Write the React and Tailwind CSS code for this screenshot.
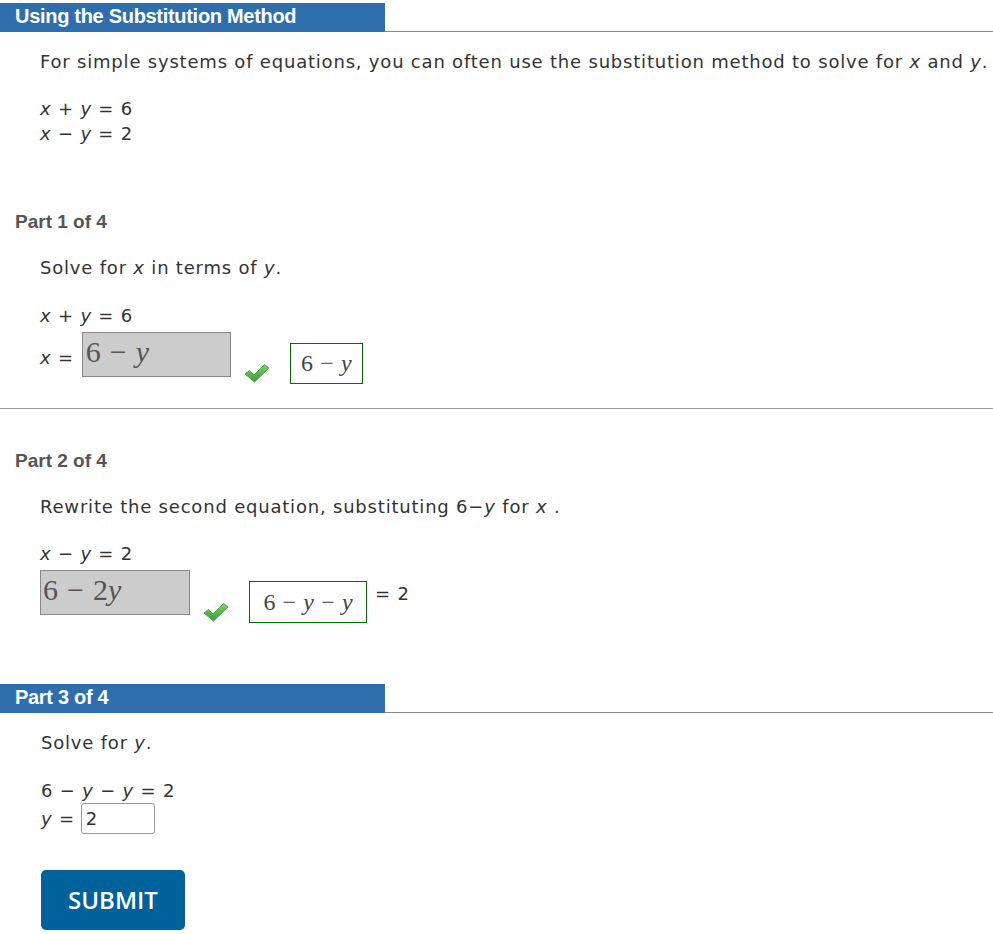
import React from 'react';

const sans = { fontFamily: '"DejaVu Sans", Verdana, sans-serif' };

function Check() {
  return (
    <svg width="26" height="20" viewBox="0 0 26 20" className="block">
      <defs>
        <linearGradient id="chk" x1="0" y1="0" x2="0" y2="1">
          <stop offset="0" stopColor="#80d070" />
          <stop offset="1" stopColor="#3d9a38" />
        </linearGradient>
      </defs>
      <path d="M1 11 L5.5 7.5 L10 12 L20.5 1.5 L25 5 L10.5 19 Z" fill="url(#chk)" stroke="#4aa845" strokeWidth="1" strokeLinejoin="round" />
    </svg>
  );
}

function Bar({ children }) {
  return (
    <div className="flex items-end">
      <div className="w-[385px] h-[29px] bg-[#2f6ead] text-white font-bold text-[20px] px-[15px] leading-[27px] font-['Liberation_Sans',Arial,sans-serif] tracking-[-0.3px]">
        {children}
      </div>
      <div className="flex-1 border-b border-[#888]" />
    </div>
  );
}

const I = ({ children }) => <i>{children}</i>;
const M = ({ children }) => <span className="italic font-['Liberation_Serif',serif]">{children}</span>;
const Minus = () => <span className="mx-[0.3em]">−</span>;

export default function App() {
  return (
    <div className="bg-white text-[#333] text-[18px] tracking-[0.8px] min-h-[934px] pt-[3px] overflow-hidden" style={sans}>
      <Bar>Using the Substitution Method</Bar>

      <div className="pl-[40px]">
        <p className="mt-[18px] leading-[24px] whitespace-nowrap">
          For simple systems of equations, you can often use the substitution method to solve for <I>x</I> and <I>y</I>.
        </p>
        <div className="mt-[22px] leading-[25px]">
          <div><I>x</I> + <I>y</I> = 6</div>
          <div><I>x</I> − <I>y</I> = 2</div>
        </div>
      </div>

      <div className="mt-[64px] pl-[15px] font-bold text-[#555] text-[19px] tracking-normal leading-[24px] font-['Liberation_Sans',Arial,sans-serif]">Part 1 of 4</div>
      <div className="pl-[40px]">
        <p className="mt-[22px] leading-[24px]">Solve for <I>x</I> in terms of <I>y</I>.</p>
        <div className="mt-[24px] leading-[24px]"><I>x</I> + <I>y</I> = 6</div>
        <div className="flex items-start mt-[4px]">
          <span className="mt-[12px] mr-[8px]"><I>x</I> =</span>
          <div className="w-[149px] h-[45px] bg-[#cccccc] border border-[#888] text-[#555] text-[30px] tracking-normal leading-[38px] pl-[3px] font-['Liberation_Serif',serif]">
            6<Minus /><M>y</M>
          </div>
          <div className="mt-[31px] ml-[13px]"><Check /></div>
          <div className="mt-[11px] ml-[20px] w-[73px] h-[41px] border border-[#007000] text-[#444] text-[24px] tracking-normal leading-[38px] text-center font-['Liberation_Serif',serif]">
            6<Minus /><M>y</M>
          </div>
        </div>
      </div>

      <div className="mt-[24px] border-t border-[#999]" />

      <div className="mt-[40px] pl-[15px] font-bold text-[#555] text-[19px] tracking-normal leading-[24px] font-['Liberation_Sans',Arial,sans-serif]">Part 2 of 4</div>
      <div className="pl-[40px]">
        <p className="mt-[22px] leading-[24px]">Rewrite the second equation, substituting 6−<I>y</I> for <I>x</I> .</p>
        <div className="mt-[23px] leading-[24px]"><I>x</I> − <I>y</I> = 2</div>
        <div className="flex items-start mt-[4px]">
          <div className="w-[150px] h-[45px] bg-[#cccccc] border border-[#888] text-[#555] text-[30px] tracking-normal leading-[38px] pl-[2px] font-['Liberation_Serif',serif]">
            6<Minus />2<M>y</M>
          </div>
          <div className="mt-[32px] ml-[13px]"><Check /></div>
          <div className="mt-[11px] ml-[20px] w-[118px] h-[42px] border border-[#007000] text-[#444] text-[24px] tracking-normal leading-[40px] text-center font-['Liberation_Serif',serif]">
            6<Minus /><M>y</M><Minus /><M>y</M>
          </div>
          <span className="mt-[10px] ml-[8px]">= 2</span>
        </div>
      </div>

      <div className="mt-[61px]">
        <Bar>Part 3 of 4</Bar>
      </div>
      <div className="pl-[41px]">
        <p className="mt-[18px] leading-[24px]">Solve for <I>y</I>.</p>
        <div className="mt-[24px] leading-[24px]">6 − <I>y</I> − <I>y</I> = 2</div>
        <div className="flex items-center mt-[0px]">
          <span className="mr-[6px]"><I>y</I> =</span>
          <div className="w-[74px] h-[31px] border border-[#999] rounded-[3px] pl-[4px] leading-[29px]">2</div>
        </div>
        <button className="mt-[36px] w-[144px] h-[60px] rounded-[5px] bg-[#00629b] text-white text-[24px] tracking-normal font-semibold font-['Open_Sans',sans-serif]">
          SUBMIT
        </button>
      </div>
    </div>
  );
}
